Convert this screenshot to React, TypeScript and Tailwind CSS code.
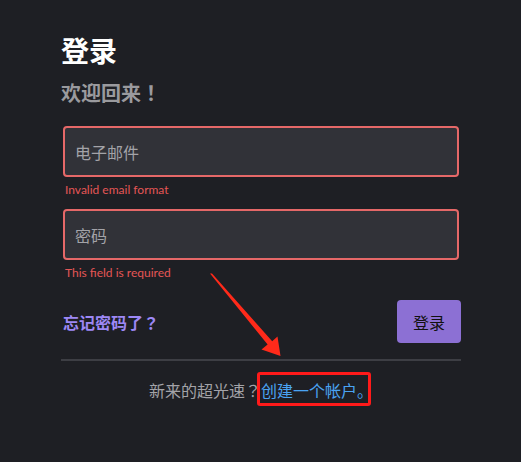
export default function App() {
  const cjk = { fontFamily: '"Noto Sans CJK SC", "Noto Sans", sans-serif' };
  const punct = { fontFamily: '"Noto Sans CJK TC", "Noto Sans CJK SC", sans-serif' };
  return (
    <div
      className="relative w-[521px] h-[462px] bg-[#1e1f24] pl-[61px] pr-[60px] pt-[32px] overflow-hidden"
      style={cjk}
    >
      <h1 className="text-[28px] leading-[36px] font-bold text-white">登录</h1>
      <h2 className="mt-[12px] text-[20px] leading-[26px] font-bold text-[#9a9a9e]">
        欢迎回来<span style={punct}>！</span>
      </h2>

      <div className="mt-[20px] mx-[2px] h-[51px] border-2 border-[#e56868] rounded-[4px] bg-[#313238] flex items-center px-[10px]">
        <span className="text-[16px] text-[#a3a3a8]">电子邮件</span>
      </div>
      <div
        className="mt-[5px] ml-[4px] text-[12px] leading-[16px] text-[#e45656]"
        style={{ fontFamily: 'Lato, "Noto Sans", sans-serif' }}
      >
        Invalid email format
      </div>

      <div className="mt-[11px] mx-[2px] h-[51px] border-2 border-[#e56868] rounded-[4px] bg-[#313238] flex items-center px-[10px]">
        <span className="text-[16px] text-[#a3a3a8]">密码</span>
      </div>
      <div
        className="mt-[5px] ml-[4px] text-[12px] leading-[16px] text-[#e45656]"
        style={{ fontFamily: 'Lato, "Noto Sans", sans-serif' }}
      >
        This field is required
      </div>

      <div className="mt-[19px] ml-[2px] flex items-center justify-between">
        <span className="text-[16px] font-bold text-[#9d88f6]">
          忘记密码了<span style={punct}>？</span>
        </span>
        <button className="w-[64px] h-[43px] rounded-[4px] bg-[#8c70d4] text-[16px] text-[#111111]">登录</button>
      </div>

      <div className="mt-[16px] h-[2px] bg-[#3d3e44]" />

      <div className="mt-[17px] text-center text-[16px] leading-[24px] text-[#a3a3a8]">
        新来的超光速<span style={punct}>？</span>
        <span className="text-[#4aa3f2]">创建一个帐户。</span>
      </div>

      <div className="absolute left-[257px] top-[372px] w-[114px] h-[34px] border-[3px] border-[#ff1a1a] rounded-[3px]" />

      <svg className="absolute left-0 top-0" width="521" height="462" viewBox="0 0 521 462">
        <polygon
          points="210,273.5 212,273.5 272.2,341.2 277.5,336.5 280.5,356 261.5,349.5 267.6,344.6"
          fill="#ff2a1a"
        />
      </svg>
    </div>
  );
}
